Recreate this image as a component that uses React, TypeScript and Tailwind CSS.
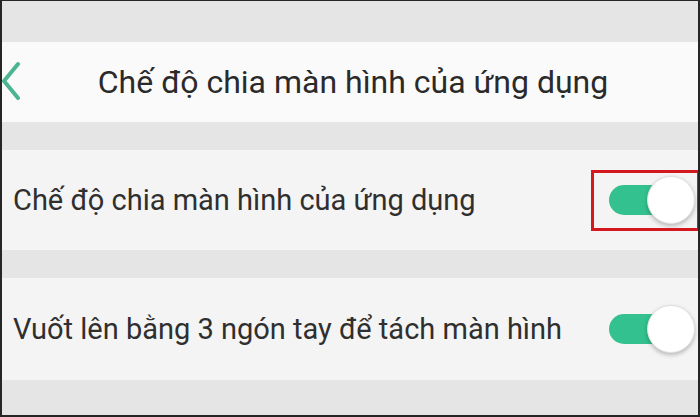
import React from 'react';

function Toggle() {
  return (
    <div className="relative h-[48px] w-[86px] shrink-0">
      <div className="absolute left-0 top-[9px] h-[30px] w-[70px] rounded-full bg-[#33c28f]" />
      <div className="absolute right-0 top-0 h-[48px] w-[48px] rounded-full border border-[#e2e2e2] bg-white shadow-[0_2px_4px_rgba(0,0,0,0.25)]" />
    </div>
  );
}

function Row({ label, boxed, h }: { label: string; boxed?: boolean; h: string }) {
  return (
    <div className={`relative flex items-center justify-between bg-[#f4f4f4] pl-[11px] pr-[3px] ${h}`}>
      <span className="text-[29px] leading-none text-[#2f2f2f]">{label}</span>
      <Toggle />
      {boxed && (
        <div className="absolute right-[-2px] top-[20px] h-[61px] w-[109px] border-[3px] border-[#d3181f]" />
      )}
    </div>
  );
}

export default function App() {
  return (
    <div
      className="flex h-[417px] w-[700px] flex-col overflow-hidden border-b-2 border-l-2 border-r-2 border-t border-[#262626] bg-[#e5e5e5]"
      style={{ fontFamily: 'Roboto, "Noto Sans", sans-serif' }}
    >
      <div className="h-[41px] shrink-0" />
      <div className="relative flex h-[80px] shrink-0 items-center justify-center bg-[#fafafa] pl-[6px]">
        <svg className="absolute left-[-2px] top-[19px]" width="22" height="40" viewBox="0 0 22 40">
          <path d="M18 3 L4 20 L18 37" fill="none" stroke="#4cb58f" strokeWidth="4" strokeLinecap="round" strokeLinejoin="round" />
        </svg>
        <span className="text-[32px] leading-none text-[#2a2a2a]">Chế độ chia màn hình của ứng dụng</span>
      </div>
      <div className="h-[28px] shrink-0" />
      <Row label="Chế độ chia màn hình của ứng dụng" boxed h="h-[100px]" />
      <div className="h-[28px] shrink-0" />
      <Row label="Vuốt lên bằng 3 ngón tay để tách màn hình" h="h-[102px]" />
    </div>
  );
}
